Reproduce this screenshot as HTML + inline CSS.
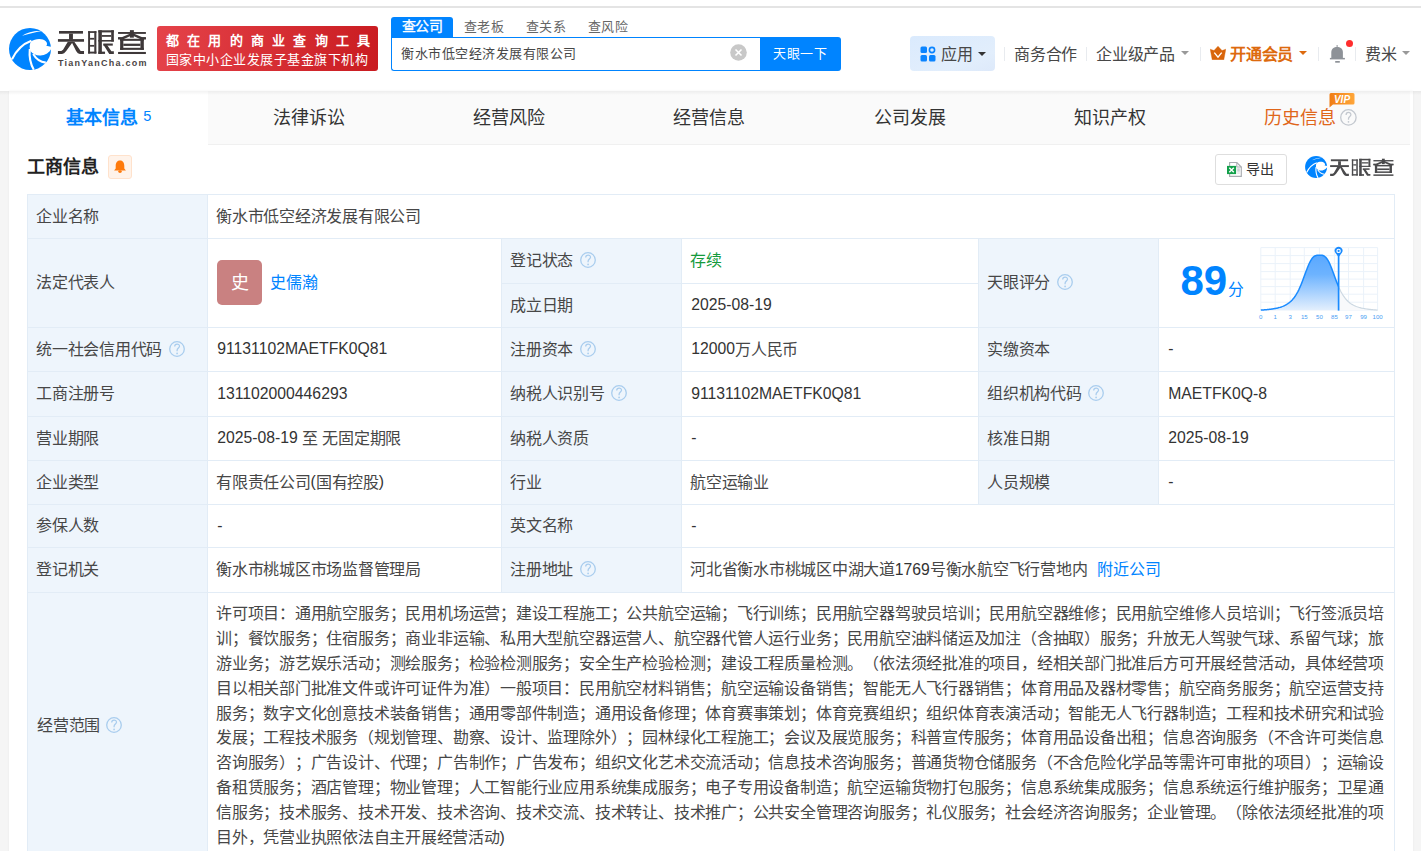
<!DOCTYPE html><html lang="zh-CN"><head><meta charset="utf-8"><style>
*{margin:0;padding:0;box-sizing:border-box}
html,body{width:1421px;height:851px;overflow:hidden;background:#f5f5f5;text-spacing-trim:space-all;font-family:"Liberation Sans",sans-serif;color:#333}
.a{position:absolute}
.t{position:absolute;white-space:nowrap;font-size:15.75px;line-height:20px;color:#333}
.c{color:#474747}
.hl{position:absolute;height:1px;background:#e2ecf6}
.vl{position:absolute;width:1px;background:#e2ecf6}
.sc{position:absolute;left:216px;width:1168px;font-size:15.75px;line-height:20px;white-space:nowrap;text-align:justify;text-align-last:justify;color:#333}
</style></head><body>
<div class="a" style="left:0;top:0;width:1421px;height:6px;background:#fff"></div>
<div class="a" style="left:0;top:6px;width:1421px;height:2px;background:#e4e4e4"></div>
<div class="a" style="left:0;top:8px;width:1421px;height:83px;background:#fff"></div>
<svg class="a" style="left:5.00px;top:23.80px" width="50.00" height="50.00" viewBox="0 0 50 50">
<circle cx="25" cy="25" r="21" fill="#0084ff"/>
<path d="M17.2 11.8 C22 8.3 30 6.5 36.8 7.1 C30 8.3 23 10 17.2 11.8 Z" fill="#fff"/>
<path d="M26 17.5 C30 14.5 37.5 14 40.8 17.2 C42.5 19 42.3 21 41.2 21.8 L47 23 C46 27 42 30.5 37 31.3 C32 32 28 30.5 25.5 27 C24.2 24 24.5 20 26 17.5 Z" fill="#fff"/>
<path d="M7 35.3 C11 27 17.5 20 26.4 16.8" fill="none" stroke="#fff" stroke-width="2.1"/>
<path d="M24.8 25 C24 33 25.5 40 28.8 45.8" fill="none" stroke="#fff" stroke-width="2.1"/>
<path d="M28.2 30 C31 35 36 38 40.8 38.6" fill="none" stroke="#fff" stroke-width="2.1"/>
</svg>
<svg class="a" style="left:55px;top:25px" width="95" height="35" viewBox="55 25 95 35"><g fill="#3e3839" shape-rendering="geometricPrecision"><rect x="59.00" y="31.00" width="23.97" height="2.64"/><rect x="69.04" y="33.64" width="3.88" height="5.99"/><rect x="57.94" y="39.10" width="26.08" height="2.64"/><path d="M67.81 41.75 L72.92 41.75 L66.22 50.91 L64.11 53.20 L61.99 54.08 L57.94 54.08 L57.94 51.09 L61.29 51.09 L63.05 49.85 Z"/><path d="M71.51 41.75 L74.33 41.75 L80.67 51.09 L84.02 51.09 L84.02 54.08 L79.97 54.08 L77.85 53.20 L76.09 50.91 Z"/><rect x="88.11" y="31.17" width="1.94" height="22.38"/><rect x="94.28" y="31.17" width="2.11" height="22.38"/><rect x="88.11" y="31.17" width="8.28" height="1.76"/><rect x="88.11" y="51.62" width="8.28" height="1.94"/><rect x="90.05" y="37.87" width="4.23" height="1.76"/><rect x="90.05" y="44.92" width="4.23" height="1.76"/><rect x="98.34" y="30.29" width="3.52" height="23.62"/><rect x="98.34" y="30.29" width="15.51" height="2.11"/><rect x="101.86" y="35.05" width="9.34" height="1.76"/><rect x="98.34" y="39.98" width="15.51" height="1.59"/><rect x="111.20" y="30.29" width="2.64" height="11.28"/><rect x="98.34" y="51.62" width="6.70" height="2.29"/><rect x="103.27" y="43.51" width="9.52" height="2.11"/><path d="M103.27 44.57 L106.80 44.57 L111.38 51.26 L113.85 51.26 L113.85 53.91 L109.26 53.91 Z"/><rect x="118.07" y="32.02" width="27.82" height="1.88"/><rect x="129.91" y="30.14" width="3.95" height="7.52"/><path d="M131.04 33.14 L133.29 34.65 L123.89 38.97 L122.39 38.97 L118.07 38.97 L118.07 37.28 L121.64 37.28 Z"/><path d="M132.92 33.14 L130.66 34.65 L140.06 38.97 L141.56 38.97 L145.89 38.97 L145.89 37.28 L142.32 37.28 Z"/><rect x="118.07" y="37.28" width="5.45" height="2.26"/><rect x="140.44" y="37.28" width="5.45" height="2.26"/><rect x="120.14" y="38.78" width="23.68" height="2.07"/><rect x="120.14" y="38.78" width="3.20" height="11.09"/><rect x="140.44" y="38.78" width="3.38" height="11.09"/><rect x="123.33" y="43.67" width="17.11" height="2.26"/><rect x="120.14" y="47.80" width="23.68" height="2.07"/><rect x="118.07" y="51.94" width="27.82" height="2.07"/></g></svg>
<div class="a" style="left:58px;top:57px;font-size:9px;line-height:12px;font-weight:bold;color:#4a4444;letter-spacing:1.25px;white-space:nowrap">TianYanCha.com</div>
<div class="a" style="left:157px;top:26px;width:221px;height:45px;border-radius:3px;background:linear-gradient(100deg,#e5434a,#c91b20)"></div>
<div class="a" style="left:166px;top:32.5px;width:204px;font-size:13px;line-height:16px;font-weight:bold;color:#fff;text-align-last:justify;text-align:justify;white-space:nowrap">都在用的商业查询工具</div>
<div class="a" style="left:165.5px;top:50.5px;width:206px;font-size:13.5px;line-height:17px;color:#fff;white-space:nowrap"><span style="font-size:13px;letter-spacing:0.500px">国家中小企业发展子基金旗下机构</span></div>
<div class="a" style="left:391px;top:17px;width:62px;height:21px;border-radius:3px 3px 0 0;background:#0084ff"></div>
<div class="a" style="left:401.5px;top:16.8px;font-size:14px;line-height:18px;-webkit-text-stroke:0.35px #fff;letter-spacing:-0.4px;color:#fff;white-space:nowrap">查公司</div>
<div class="a" style="left:463.5px;top:18px;font-size:13.5px;line-height:18px;color:#666;white-space:nowrap"><span style="font-size:13px;letter-spacing:0.500px">查老板</span></div>
<div class="a" style="left:525.5px;top:18px;font-size:13.5px;line-height:18px;color:#666;white-space:nowrap"><span style="font-size:13px;letter-spacing:0.500px">查关系</span></div>
<div class="a" style="left:587.5px;top:18px;font-size:13.5px;line-height:18px;color:#666;white-space:nowrap"><span style="font-size:13px;letter-spacing:0.500px">查风险</span></div>
<div class="a" style="left:391px;top:37px;width:370px;height:34px;border:1px solid #0084ff;border-right:none;border-radius:0 0 0 3px;background:#fff"></div>
<div class="a" style="left:401px;top:45px;font-size:13.5px;line-height:18px;color:#333;white-space:nowrap"><span class="c" style="font-size:13px;letter-spacing:0.500px">衡水市低空经济发展有限公司</span></div>
<svg class="a" style="left:730px;top:44px" width="17" height="17" viewBox="0 0 17 17"><circle cx="8.5" cy="8.5" r="8.3" fill="#c8c8c8"/><path d="M5.5 5.5 L11.5 11.5 M11.5 5.5 L5.5 11.5" stroke="#fff" stroke-width="1.6"/></svg>
<div class="a" style="left:760px;top:37px;width:81px;height:34px;border-radius:0 3px 3px 0;background:#0084ff"></div>
<div class="a" style="left:773px;top:45px;font-size:13.5px;line-height:18px;color:#fff;white-space:nowrap"><span style="font-size:13px;letter-spacing:0.500px">天眼一下</span></div>
<div class="a" style="left:910px;top:36px;width:85px;height:35px;border-radius:4px;background:linear-gradient(160deg,#daeafd,#e2eefc 70%,#dde9fa)"></div>
<svg class="a" style="left:920px;top:46px" width="16" height="16" viewBox="0 0 16 16"><rect x="0.5" y="0.5" width="6.5" height="6.5" rx="1.5" fill="#0a84ff"/><circle cx="12" cy="4" r="2.6" fill="none" stroke="#0a84ff" stroke-width="1.6"/><rect x="0.5" y="9" width="6.5" height="6.5" rx="1.5" fill="#0a84ff"/><rect x="9" y="9" width="6.5" height="6.5" rx="1.5" fill="#0a84ff"/></svg>
<div class="t" style="left:941px;top:44.5px"><span class="c" style="font-size:16px;letter-spacing:-0.250px">应用</span></div>
<svg class="a" style="left:978px;top:52px" width="8" height="4" viewBox="0 0 8 4"><path d="M0 0 L8 0 L4.0 4 Z" fill="#333"/></svg>
<div class="a" style="left:1004px;top:47px;width:1px;height:14px;background:#e8ebef"></div>
<div class="a" style="left:1086px;top:47px;width:1px;height:14px;background:#e8ebef"></div>
<div class="a" style="left:1200px;top:47px;width:1px;height:14px;background:#e8ebef"></div>
<div class="a" style="left:1318px;top:47px;width:1px;height:14px;background:#e8ebef"></div>
<div class="a" style="left:1355px;top:47px;width:1px;height:14px;background:#e8ebef"></div>
<div class="t" style="left:1014px;top:44.5px"><span class="c" style="font-size:16px;letter-spacing:-0.250px">商务合作</span></div>
<div class="t" style="left:1096px;top:44.5px"><span class="c" style="font-size:16px;letter-spacing:-0.250px">企业级产品</span></div>
<svg class="a" style="left:1181px;top:51px" width="8" height="4" viewBox="0 0 8 4"><path d="M0 0 L8 0 L4.0 4 Z" fill="#999"/></svg>
<svg class="a" style="left:1210px;top:46px" width="16" height="14" viewBox="0 0 16 14"><path d="M0.2 3.2 L4 4.6 L8 0.2 L12 4.6 L15.8 3.2 L13.8 13.8 L2.2 13.8 Z" fill="#d9650b" stroke="#d9650b" stroke-width="0.4" stroke-linejoin="round"/><path d="M4.3 6.6 L8 11.2 L11.7 6.6" fill="none" stroke="#fff" stroke-width="1.4"/></svg>
<div class="t" style="left:1230px;top:44.5px;font-weight:bold;color:#dd6a0e"><span style="font-size:16px;letter-spacing:-0.250px">开通会员</span></div>
<svg class="a" style="left:1299px;top:51px" width="8" height="4" viewBox="0 0 8 4"><path d="M0 0 L8 0 L4.0 4 Z" fill="#dd6a0e"/></svg>
<svg class="a" style="left:1329px;top:44px" width="17" height="19" viewBox="0 0 17 19"><path d="M2.3 14 L2.3 8 C2.3 4.8 5 2.9 8.1 2.9 C11.2 2.9 13.9 4.8 13.9 8 L13.9 14 Z" fill="#8e9298"/><rect x="0.9" y="13.9" width="15" height="1.5" fill="#8e9298"/><rect x="7.6" y="1" width="1" height="2.4" fill="#8e9298"/><rect x="6.2" y="17" width="4.6" height="1.7" fill="#8e9298"/></svg>
<div class="a" style="left:1346px;top:40.4px;width:7px;height:7px;border-radius:50%;background:#ff2d2d"></div>
<div class="t" style="left:1365px;top:44.5px"><span class="c" style="font-size:16px;letter-spacing:-0.250px">费米</span></div>
<svg class="a" style="left:1402px;top:51px" width="8" height="4" viewBox="0 0 8 4"><path d="M0 0 L8 0 L4.0 4 Z" fill="#999"/></svg>
<div class="a" style="left:9px;top:91px;width:1404px;height:800px;background:#fff;box-shadow:0 0 2px rgba(0,0,0,0.06)"></div>
<div class="a" style="left:9px;top:91px;width:1401px;height:54px;background:#fafafa;border-bottom:1px solid #f0f0f0"></div>
<div class="a" style="left:9px;top:91px;width:199px;height:54px;background:#fff"></div>
<div class="a" style="left:0;top:91px;width:1421px;height:4px;background:linear-gradient(rgba(0,0,0,0.05),rgba(0,0,0,0))"></div>
<div class="a" style="left:8.700000000000003px;top:106.5px;width:200px;text-align:center;font-size:18px;line-height:22px;font-weight:bold;color:#0084ff;white-space:nowrap">基本信息<span style="font-weight:normal;font-size:14.6px;margin-left:5px;position:relative;top:-3px">5</span></div>
<div class="a" style="left:208.89999999999998px;top:106.5px;width:200px;text-align:center;font-size:18px;line-height:22px;color:#333;white-space:nowrap">法律诉讼</div>
<div class="a" style="left:409.09999999999997px;top:106.5px;width:200px;text-align:center;font-size:18px;line-height:22px;color:#333;white-space:nowrap">经营风险</div>
<div class="a" style="left:609.3px;top:106.5px;width:200px;text-align:center;font-size:18px;line-height:22px;color:#333;white-space:nowrap">经营信息</div>
<div class="a" style="left:809.5px;top:106.5px;width:200px;text-align:center;font-size:18px;line-height:22px;color:#333;white-space:nowrap">公司发展</div>
<div class="a" style="left:1009.7px;top:106.5px;width:200px;text-align:center;font-size:18px;line-height:22px;color:#333;white-space:nowrap">知识产权</div>
<div class="a" style="left:1264px;top:106.5px;font-size:18px;line-height:22px;color:#e0661a;white-space:nowrap">历史信息</div>
<svg class="a" style="left:1339.0px;top:107.6px" width="18.8" height="18.8" viewBox="-9.4 -9.4 18.8 18.8"><circle cx="0" cy="0" r="7.7" fill="none" stroke="#c3c8cf" stroke-width="1.3"/><path d="M-2.3 -2.4 C-2.3 -4.2 -1.2 -5 0.1 -5 C1.5 -5 2.5 -4.1 2.5 -2.7 C2.5 -1.1 0.1 -0.7 0.1 1.3 L0.1 2.3" fill="none" stroke="#c3c8cf" stroke-width="1.25"/><circle cx="0.1" cy="4.4" r="0.85" fill="#c3c8cf"/></svg>
<svg class="a" style="left:1329px;top:92px" width="26" height="16" viewBox="0 0 26 16"><defs><linearGradient id="vg" x1="0" x2="1"><stop offset="0" stop-color="#f07d15"/><stop offset="1" stop-color="#ffa63a"/></linearGradient></defs><path d="M2 1 H24 A1.5 1.5 0 0 1 25.5 2.5 V11 A1.5 1.5 0 0 1 24 12.5 H4 L0.5 15.5 L0.5 2.5 A1.5 1.5 0 0 1 2 1 Z" fill="url(#vg)"/><text x="13" y="10.5" font-family="Liberation Sans" font-size="10" font-style="italic" font-weight="bold" fill="#fff" text-anchor="middle">VIP</text></svg>
<div class="a" style="left:26.5px;top:156px;font-size:18px;line-height:22px;font-weight:bold;color:#222;white-space:nowrap">工商信息</div>
<div class="a" style="left:108px;top:155px;width:24px;height:24px;border-radius:3px;background:#fff3ea;border:1px solid #ffe2cc"></div>
<svg class="a" style="left:114px;top:160px" width="12" height="13" viewBox="0 0 12 13"><path d="M6 0.6 C9.2 0.6 10.3 3.2 10.3 6 L10.3 8.6 L11.9 10.6 L0.1 10.6 L1.7 8.6 L1.7 6 C1.7 3.2 2.8 0.6 6 0.6 Z" fill="#ff7a0b"/><ellipse cx="6" cy="11.6" rx="1.8" ry="1.3" fill="#ff7a0b"/></svg>
<div class="a" style="left:1215px;top:154px;width:72px;height:31px;border:1px solid #dedede;border-radius:3px;background:#fff"></div>
<svg class="a" style="left:1226px;top:161px" width="17" height="17" viewBox="0 0 17 17"><path d="M3.6 1.5 H10.8 L15.3 6 V15.3 H3.6 Z" fill="#fff" stroke="#a9acb1" stroke-width="1.15"/><path d="M10.8 1.5 V6 H15.3" fill="none" stroke="#a9acb1" stroke-width="1"/><rect x="11.2" y="7.3" width="2.6" height="3.4" fill="#cdd0d4"/><rect x="11.2" y="11.6" width="2.6" height="0.9" fill="#cdd0d4"/><rect x="1" y="4.9" width="9.1" height="8.2" fill="#12a04a"/><path d="M3.3 6.8 L7.8 11.2 M7.8 6.8 L3.3 11.2" stroke="#fff" stroke-width="1.4"/></svg>
<div class="a" style="left:1246px;top:160px;font-size:14px;line-height:18px;color:#333;white-space:nowrap">导出</div>
<svg class="a" style="left:1302.90px;top:154.30px" width="26.19" height="26.19" viewBox="0 0 50 50">
<circle cx="25" cy="25" r="21" fill="#0084ff"/>
<path d="M17.2 11.8 C22 8.3 30 6.5 36.8 7.1 C30 8.3 23 10 17.2 11.8 Z" fill="#fff"/>
<path d="M26 17.5 C30 14.5 37.5 14 40.8 17.2 C42.5 19 42.3 21 41.2 21.8 L47 23 C46 27 42 30.5 37 31.3 C32 32 28 30.5 25.5 27 C24.2 24 24.5 20 26 17.5 Z" fill="#fff"/>
<path d="M7 35.3 C11 27 17.5 20 26.4 16.8" fill="none" stroke="#fff" stroke-width="2.1"/>
<path d="M24.8 25 C24 33 25.5 40 28.8 45.8" fill="none" stroke="#fff" stroke-width="2.1"/>
<path d="M28.2 30 C31 35 36 38 40.8 38.6" fill="none" stroke="#fff" stroke-width="2.1"/>
</svg>
<svg class="a" style="left:1328.2px;top:155.3px" width="68.4" height="25.2" viewBox="55 25 95 35" preserveAspectRatio="none"><g fill="#4a4a4c" shape-rendering="geometricPrecision"><rect x="59.00" y="31.00" width="23.97" height="2.64"/><rect x="69.04" y="33.64" width="3.88" height="5.99"/><rect x="57.94" y="39.10" width="26.08" height="2.64"/><path d="M67.81 41.75 L72.92 41.75 L66.22 50.91 L64.11 53.20 L61.99 54.08 L57.94 54.08 L57.94 51.09 L61.29 51.09 L63.05 49.85 Z"/><path d="M71.51 41.75 L74.33 41.75 L80.67 51.09 L84.02 51.09 L84.02 54.08 L79.97 54.08 L77.85 53.20 L76.09 50.91 Z"/><rect x="88.11" y="31.17" width="1.94" height="22.38"/><rect x="94.28" y="31.17" width="2.11" height="22.38"/><rect x="88.11" y="31.17" width="8.28" height="1.76"/><rect x="88.11" y="51.62" width="8.28" height="1.94"/><rect x="90.05" y="37.87" width="4.23" height="1.76"/><rect x="90.05" y="44.92" width="4.23" height="1.76"/><rect x="98.34" y="30.29" width="3.52" height="23.62"/><rect x="98.34" y="30.29" width="15.51" height="2.11"/><rect x="101.86" y="35.05" width="9.34" height="1.76"/><rect x="98.34" y="39.98" width="15.51" height="1.59"/><rect x="111.20" y="30.29" width="2.64" height="11.28"/><rect x="98.34" y="51.62" width="6.70" height="2.29"/><rect x="103.27" y="43.51" width="9.52" height="2.11"/><path d="M103.27 44.57 L106.80 44.57 L111.38 51.26 L113.85 51.26 L113.85 53.91 L109.26 53.91 Z"/><rect x="118.07" y="32.02" width="27.82" height="1.88"/><rect x="129.91" y="30.14" width="3.95" height="7.52"/><path d="M131.04 33.14 L133.29 34.65 L123.89 38.97 L122.39 38.97 L118.07 38.97 L118.07 37.28 L121.64 37.28 Z"/><path d="M132.92 33.14 L130.66 34.65 L140.06 38.97 L141.56 38.97 L145.89 38.97 L145.89 37.28 L142.32 37.28 Z"/><rect x="118.07" y="37.28" width="5.45" height="2.26"/><rect x="140.44" y="37.28" width="5.45" height="2.26"/><rect x="120.14" y="38.78" width="23.68" height="2.07"/><rect x="120.14" y="38.78" width="3.20" height="11.09"/><rect x="140.44" y="38.78" width="3.38" height="11.09"/><rect x="123.33" y="43.67" width="17.11" height="2.26"/><rect x="120.14" y="47.80" width="23.68" height="2.07"/><rect x="118.07" y="51.94" width="27.82" height="2.07"/></g></svg>
<div class="a" style="left:27px;top:194px;width:1368px;height:706px;background:#fff"></div>
<div class="a" style="left:27px;top:194px;width:180px;height:706px;background:#eef5fc"></div>
<div class="a" style="left:501px;top:238px;width:180px;height:354px;background:#eef5fc"></div>
<div class="a" style="left:978px;top:238px;width:180px;height:266px;background:#eef5fc"></div>
<div class="hl" style="left:27px;top:194px;width:1368px"></div>
<div class="hl" style="left:27px;top:238px;width:1368px"></div>
<div class="hl" style="left:501px;top:283px;width:478px"></div>
<div class="hl" style="left:27px;top:327px;width:1368px"></div>
<div class="hl" style="left:27px;top:371px;width:1368px"></div>
<div class="hl" style="left:27px;top:416px;width:1368px"></div>
<div class="hl" style="left:27px;top:460px;width:1368px"></div>
<div class="hl" style="left:27px;top:504px;width:1368px"></div>
<div class="hl" style="left:27px;top:547px;width:1368px"></div>
<div class="hl" style="left:27px;top:592px;width:1368px"></div>
<div class="vl" style="left:27px;top:194px;height:707px"></div>
<div class="vl" style="left:1394px;top:194px;height:707px"></div>
<div class="vl" style="left:207px;top:194px;height:707px"></div>
<div class="vl" style="left:501px;top:238px;height:355px"></div>
<div class="vl" style="left:681px;top:238px;height:355px"></div>
<div class="vl" style="left:978px;top:238px;height:267px"></div>
<div class="vl" style="left:1158px;top:238px;height:267px"></div>
<div class="t" style="left:36px;top:206.1px;"><span class="c" style="font-size:16px;letter-spacing:-0.250px;position:relative;top:0.9px">企业名称</span></div>
<div class="t" style="left:216px;top:206.1px;"><span class="c" style="font-size:16px;letter-spacing:-0.250px;position:relative;top:0.9px">衡水市低空经济发展有限公司</span></div>
<div class="t" style="left:36px;top:272.6px;"><span class="c" style="font-size:16px;letter-spacing:-0.250px;position:relative;top:0.9px">法定代表人</span></div>
<div class="a" style="left:217px;top:260px;width:45px;height:45px;border-radius:5px;background:#c98181;color:#fff;font-size:18px;line-height:47px;text-align:center">史</div>
<div class="t" style="left:270px;top:272.5px;color:#0084ff"><span style="font-size:16px;letter-spacing:-0.250px">史儒瀚</span></div>
<div class="t" style="left:510px;top:250.6px;"><span class="c" style="font-size:16px;letter-spacing:-0.250px;position:relative;top:0.9px">登记状态</span></div>
<svg class="a" style="left:578.5px;top:251.0px" width="18" height="18" viewBox="-9.0 -9.0 18 18"><circle cx="0" cy="0" r="7.3" fill="none" stroke="#a9cdee" stroke-width="1.3"/><path d="M-2.3 -2.4 C-2.3 -4.2 -1.2 -5 0.1 -5 C1.5 -5 2.5 -4.1 2.5 -2.7 C2.5 -1.1 0.1 -0.7 0.1 1.3 L0.1 2.3" fill="none" stroke="#a9cdee" stroke-width="1.25"/><circle cx="0.1" cy="4.4" r="0.85" fill="#a9cdee"/></svg>
<div class="t" style="left:690px;top:250.6px;color:#159b3d"><span style="font-size:16px;letter-spacing:-0.250px;position:relative;top:0.9px">存续</span></div>
<div class="t" style="left:510px;top:295.1px;"><span class="c" style="font-size:16px;letter-spacing:-0.250px;position:relative;top:0.9px">成立日期</span></div>
<div class="t" style="left:691.2px;top:295.1px;">2025-08-19</div>
<div class="t" style="left:987px;top:272.6px;"><span class="c" style="font-size:16px;letter-spacing:-0.250px;position:relative;top:0.9px">天眼评分</span></div>
<svg class="a" style="left:1055.5px;top:273.0px" width="18" height="18" viewBox="-9.0 -9.0 18 18"><circle cx="0" cy="0" r="7.3" fill="none" stroke="#a9cdee" stroke-width="1.3"/><path d="M-2.3 -2.4 C-2.3 -4.2 -1.2 -5 0.1 -5 C1.5 -5 2.5 -4.1 2.5 -2.7 C2.5 -1.1 0.1 -0.7 0.1 1.3 L0.1 2.3" fill="none" stroke="#a9cdee" stroke-width="1.25"/><circle cx="0.1" cy="4.4" r="0.85" fill="#a9cdee"/></svg>
<div class="t" style="left:36px;top:339.1px;"><span class="c" style="font-size:16px;letter-spacing:-0.250px;position:relative;top:0.9px">统一社会信用代码</span></div>
<svg class="a" style="left:167.5px;top:339.5px" width="18" height="18" viewBox="-9.0 -9.0 18 18"><circle cx="0" cy="0" r="7.3" fill="none" stroke="#a9cdee" stroke-width="1.3"/><path d="M-2.3 -2.4 C-2.3 -4.2 -1.2 -5 0.1 -5 C1.5 -5 2.5 -4.1 2.5 -2.7 C2.5 -1.1 0.1 -0.7 0.1 1.3 L0.1 2.3" fill="none" stroke="#a9cdee" stroke-width="1.25"/><circle cx="0.1" cy="4.4" r="0.85" fill="#a9cdee"/></svg>
<div class="t" style="left:217.2px;top:339.1px;">91131102MAETFK0Q81</div>
<div class="t" style="left:510px;top:339.1px;"><span class="c" style="font-size:16px;letter-spacing:-0.250px;position:relative;top:0.9px">注册资本</span></div>
<svg class="a" style="left:578.5px;top:339.5px" width="18" height="18" viewBox="-9.0 -9.0 18 18"><circle cx="0" cy="0" r="7.3" fill="none" stroke="#a9cdee" stroke-width="1.3"/><path d="M-2.3 -2.4 C-2.3 -4.2 -1.2 -5 0.1 -5 C1.5 -5 2.5 -4.1 2.5 -2.7 C2.5 -1.1 0.1 -0.7 0.1 1.3 L0.1 2.3" fill="none" stroke="#a9cdee" stroke-width="1.25"/><circle cx="0.1" cy="4.4" r="0.85" fill="#a9cdee"/></svg>
<div class="t" style="left:691.2px;top:339.1px;">12000<span class="c" style="font-size:16px;letter-spacing:-0.250px;position:relative;top:0.9px">万人民币</span></div>
<div class="t" style="left:987px;top:339.1px;"><span class="c" style="font-size:16px;letter-spacing:-0.250px;position:relative;top:0.9px">实缴资本</span></div>
<div class="t" style="left:1168.2px;top:339.1px;">-</div>
<div class="t" style="left:36px;top:383.6px;"><span class="c" style="font-size:16px;letter-spacing:-0.250px;position:relative;top:0.9px">工商注册号</span></div>
<div class="t" style="left:217.2px;top:383.6px;">131102000446293</div>
<div class="t" style="left:510px;top:383.6px;"><span class="c" style="font-size:16px;letter-spacing:-0.250px;position:relative;top:0.9px">纳税人识别号</span></div>
<svg class="a" style="left:610.0px;top:384.0px" width="18" height="18" viewBox="-9.0 -9.0 18 18"><circle cx="0" cy="0" r="7.3" fill="none" stroke="#a9cdee" stroke-width="1.3"/><path d="M-2.3 -2.4 C-2.3 -4.2 -1.2 -5 0.1 -5 C1.5 -5 2.5 -4.1 2.5 -2.7 C2.5 -1.1 0.1 -0.7 0.1 1.3 L0.1 2.3" fill="none" stroke="#a9cdee" stroke-width="1.25"/><circle cx="0.1" cy="4.4" r="0.85" fill="#a9cdee"/></svg>
<div class="t" style="left:691.2px;top:383.6px;">91131102MAETFK0Q81</div>
<div class="t" style="left:987px;top:383.6px;"><span class="c" style="font-size:16px;letter-spacing:-0.250px;position:relative;top:0.9px">组织机构代码</span></div>
<svg class="a" style="left:1087.0px;top:384.0px" width="18" height="18" viewBox="-9.0 -9.0 18 18"><circle cx="0" cy="0" r="7.3" fill="none" stroke="#a9cdee" stroke-width="1.3"/><path d="M-2.3 -2.4 C-2.3 -4.2 -1.2 -5 0.1 -5 C1.5 -5 2.5 -4.1 2.5 -2.7 C2.5 -1.1 0.1 -0.7 0.1 1.3 L0.1 2.3" fill="none" stroke="#a9cdee" stroke-width="1.25"/><circle cx="0.1" cy="4.4" r="0.85" fill="#a9cdee"/></svg>
<div class="t" style="left:1168.2px;top:383.6px;">MAETFK0Q-8</div>
<div class="t" style="left:36px;top:428.1px;"><span class="c" style="font-size:16px;letter-spacing:-0.250px;position:relative;top:0.9px">营业期限</span></div>
<div class="t" style="left:217.2px;top:428.1px;">2025-08-19 <span class="c" style="font-size:16px;letter-spacing:-0.250px;position:relative;top:0.9px">至</span> <span class="c" style="font-size:16px;letter-spacing:-0.250px;position:relative;top:0.9px">无固定期限</span></div>
<div class="t" style="left:510px;top:428.1px;"><span class="c" style="font-size:16px;letter-spacing:-0.250px;position:relative;top:0.9px">纳税人资质</span></div>
<div class="t" style="left:691.2px;top:428.1px;">-</div>
<div class="t" style="left:987px;top:428.1px;"><span class="c" style="font-size:16px;letter-spacing:-0.250px;position:relative;top:0.9px">核准日期</span></div>
<div class="t" style="left:1168.2px;top:428.1px;">2025-08-19</div>
<div class="t" style="left:36px;top:472.1px;"><span class="c" style="font-size:16px;letter-spacing:-0.250px;position:relative;top:0.9px">企业类型</span></div>
<div class="t" style="left:216px;top:472.1px;"><span class="c" style="font-size:16px;letter-spacing:-0.250px;position:relative;top:0.9px">有限责任公司</span>(<span class="c" style="font-size:16px;letter-spacing:-0.250px;position:relative;top:0.9px">国有控股</span>)</div>
<div class="t" style="left:510px;top:472.1px;"><span class="c" style="font-size:16px;letter-spacing:-0.250px;position:relative;top:0.9px">行业</span></div>
<div class="t" style="left:690px;top:472.1px;"><span class="c" style="font-size:16px;letter-spacing:-0.250px;position:relative;top:0.9px">航空运输业</span></div>
<div class="t" style="left:987px;top:472.1px;"><span class="c" style="font-size:16px;letter-spacing:-0.250px;position:relative;top:0.9px">人员规模</span></div>
<div class="t" style="left:1168.2px;top:472.1px;">-</div>
<div class="t" style="left:36px;top:515.6px;"><span class="c" style="font-size:16px;letter-spacing:-0.250px;position:relative;top:0.9px">参保人数</span></div>
<div class="t" style="left:217.2px;top:515.6px;">-</div>
<div class="t" style="left:510px;top:515.6px;"><span class="c" style="font-size:16px;letter-spacing:-0.250px;position:relative;top:0.9px">英文名称</span></div>
<div class="t" style="left:691.2px;top:515.6px;">-</div>
<div class="t" style="left:36px;top:559.6px;"><span class="c" style="font-size:16px;letter-spacing:-0.250px;position:relative;top:0.9px">登记机关</span></div>
<div class="t" style="left:216px;top:559.6px;"><span class="c" style="font-size:16px;letter-spacing:-0.250px;position:relative;top:0.9px">衡水市桃城区市场监督管理局</span></div>
<div class="t" style="left:510px;top:559.6px;"><span class="c" style="font-size:16px;letter-spacing:-0.250px;position:relative;top:0.9px">注册地址</span></div>
<svg class="a" style="left:578.5px;top:560.0px" width="18" height="18" viewBox="-9.0 -9.0 18 18"><circle cx="0" cy="0" r="7.3" fill="none" stroke="#a9cdee" stroke-width="1.3"/><path d="M-2.3 -2.4 C-2.3 -4.2 -1.2 -5 0.1 -5 C1.5 -5 2.5 -4.1 2.5 -2.7 C2.5 -1.1 0.1 -0.7 0.1 1.3 L0.1 2.3" fill="none" stroke="#a9cdee" stroke-width="1.25"/><circle cx="0.1" cy="4.4" r="0.85" fill="#a9cdee"/></svg>
<div class="t" style="left:690px;top:559.6px;"><span class="c" style="font-size:16px;letter-spacing:-0.250px;position:relative;top:0.9px">河北省衡水市桃城区中湖大道</span>1769<span class="c" style="font-size:16px;letter-spacing:-0.250px;position:relative;top:0.9px">号衡水航空飞行营地内</span><span style="color:#0084ff;margin-left:10px"><span style="font-size:16px;letter-spacing:-0.250px;position:relative;top:0.9px">附近公司</span></span></div>
<div class="t" style="left:37px;top:715.1px;"><span class="c" style="font-size:16px;letter-spacing:-0.250px;position:relative;top:0.9px">经营范围</span></div>
<svg class="a" style="left:104.5px;top:716.0px" width="18" height="18" viewBox="-9.0 -9.0 18 18"><circle cx="0" cy="0" r="7.3" fill="none" stroke="#a9cdee" stroke-width="1.3"/><path d="M-2.3 -2.4 C-2.3 -4.2 -1.2 -5 0.1 -5 C1.5 -5 2.5 -4.1 2.5 -2.7 C2.5 -1.1 0.1 -0.7 0.1 1.3 L0.1 2.3" fill="none" stroke="#a9cdee" stroke-width="1.25"/><circle cx="0.1" cy="4.4" r="0.85" fill="#a9cdee"/></svg>
<div class="sc" style="top:604.20px"><span class="c" style="font-size:16px;letter-spacing:-0.250px">许可项目：通用航空服务；民用机场运营；建设工程施工；公共航空运输；飞行训练；民用航空器驾驶员培训；民用航空器维修；民用航空维修人员培训；飞行签派员培</span></div>
<div class="sc" style="top:629.03px"><span class="c" style="font-size:16px;letter-spacing:-0.250px">训；餐饮服务；住宿服务；商业非运输、私用大型航空器运营人、航空器代管人运行业务；民用航空油料储运及加注（含抽取）服务；升放无人驾驶气球、系留气球；旅</span></div>
<div class="sc" style="top:653.86px"><span class="c" style="font-size:16px;letter-spacing:-0.250px">游业务；游艺娱乐活动；测绘服务；检验检测服务；安全生产检验检测；建设工程质量检测。（依法须经批准的项目，经相关部门批准后方可开展经营活动，具体经营项</span></div>
<div class="sc" style="top:678.69px"><span class="c" style="font-size:16px;letter-spacing:-0.250px">目以相关部门批准文件或许可证件为准）一般项目：民用航空材料销售；航空运输设备销售；智能无人飞行器销售；体育用品及器材零售；航空商务服务；航空运营支持</span></div>
<div class="sc" style="top:703.52px"><span class="c" style="font-size:16px;letter-spacing:-0.250px">服务；数字文化创意技术装备销售；通用零部件制造；通用设备修理；体育赛事策划；体育竞赛组织；组织体育表演活动；智能无人飞行器制造；工程和技术研究和试验</span></div>
<div class="sc" style="top:728.35px"><span class="c" style="font-size:16px;letter-spacing:-0.250px">发展；工程技术服务（规划管理、勘察、设计、监理除外）；园林绿化工程施工；会议及展览服务；科普宣传服务；体育用品设备出租；信息咨询服务（不含许可类信息</span></div>
<div class="sc" style="top:753.18px"><span class="c" style="font-size:16px;letter-spacing:-0.250px">咨询服务）；广告设计、代理；广告制作；广告发布；组织文化艺术交流活动；信息技术咨询服务；普通货物仓储服务（不含危险化学品等需许可审批的项目）；运输设</span></div>
<div class="sc" style="top:778.01px"><span class="c" style="font-size:16px;letter-spacing:-0.250px">备租赁服务；酒店管理；物业管理；人工智能行业应用系统集成服务；电子专用设备制造；航空运输货物打包服务；信息系统集成服务；信息系统运行维护服务；卫星通</span></div>
<div class="sc" style="top:802.84px"><span class="c" style="font-size:16px;letter-spacing:-0.250px">信服务；技术服务、技术开发、技术咨询、技术交流、技术转让、技术推广；公共安全管理咨询服务；礼仪服务；社会经济咨询服务；企业管理。（除依法须经批准的项</span></div>
<div class="t" style="left:216px;top:827.67px"><span class="c" style="font-size:16px;letter-spacing:-0.250px">目外，凭营业执照依法自主开展经营活动</span>)</div>
<div class="a" style="left:1180.5px;top:258px;font-size:42px;line-height:46px;font-weight:bold;color:#0084ff;white-space:nowrap">89</div>
<div class="a" style="left:1228px;top:280px;font-size:15.75px;line-height:20px;color:#0084ff;white-space:nowrap">分</div>
<svg class="a" style="left:1250px;top:240px" width="140" height="85" viewBox="1250 240 140 85"><defs><linearGradient id="cg" x1="0" y1="0" x2="0" y2="1"><stop offset="0" stop-color="#5aa8ff"/><stop offset="0.35" stop-color="#6db3ff"/><stop offset="1" stop-color="#e3effd"/></linearGradient><clipPath id="cl"><rect x="1250" y="240" width="88.59999999999991" height="80"/></clipPath><clipPath id="cr"><rect x="1338.6" y="240" width="60" height="80"/></clipPath></defs><line x1="1260.8" y1="247.6" x2="1260.8" y2="310.1" stroke="#ebf2fa" stroke-width="1"/><line x1="1275.2" y1="247.6" x2="1275.2" y2="310.1" stroke="#ebf2fa" stroke-width="1"/><line x1="1290.2" y1="247.6" x2="1290.2" y2="310.1" stroke="#ebf2fa" stroke-width="1"/><line x1="1304.3" y1="247.6" x2="1304.3" y2="310.1" stroke="#ebf2fa" stroke-width="1"/><line x1="1319.4" y1="247.6" x2="1319.4" y2="310.1" stroke="#ebf2fa" stroke-width="1"/><line x1="1334.4" y1="247.6" x2="1334.4" y2="310.1" stroke="#ebf2fa" stroke-width="1"/><line x1="1348.5" y1="247.6" x2="1348.5" y2="310.1" stroke="#ebf2fa" stroke-width="1"/><line x1="1363.6" y1="247.6" x2="1363.6" y2="310.1" stroke="#ebf2fa" stroke-width="1"/><line x1="1377.6" y1="247.6" x2="1377.6" y2="310.1" stroke="#ebf2fa" stroke-width="1"/><line x1="1260.8" y1="247.6" x2="1377.6" y2="247.6" stroke="#ebf2fa" stroke-width="1"/><line x1="1260.8" y1="255.6" x2="1377.6" y2="255.6" stroke="#ebf2fa" stroke-width="1"/><line x1="1260.8" y1="263.6" x2="1377.6" y2="263.6" stroke="#ebf2fa" stroke-width="1"/><line x1="1260.8" y1="271.6" x2="1377.6" y2="271.6" stroke="#ebf2fa" stroke-width="1"/><line x1="1260.8" y1="279.1" x2="1377.6" y2="279.1" stroke="#ebf2fa" stroke-width="1"/><line x1="1260.8" y1="286.6" x2="1377.6" y2="286.6" stroke="#ebf2fa" stroke-width="1"/><line x1="1260.8" y1="294.2" x2="1377.6" y2="294.2" stroke="#ebf2fa" stroke-width="1"/><line x1="1260.8" y1="302.2" x2="1377.6" y2="302.2" stroke="#ebf2fa" stroke-width="1"/><line x1="1260.8" y1="310.1" x2="1377.6" y2="310.1" stroke="#ebf2fa" stroke-width="1"/><path d="M1260.80 310.10 L1261.53 310.05 L1262.26 310.01 L1262.99 309.96 L1263.72 309.90 L1264.45 309.85 L1265.18 309.79 L1265.91 309.73 L1266.64 309.66 L1267.37 309.59 L1268.10 309.51 L1268.83 309.43 L1269.56 309.35 L1270.29 309.26 L1271.02 309.17 L1271.75 309.07 L1272.48 308.96 L1273.21 308.84 L1273.94 308.72 L1274.67 308.59 L1275.40 308.45 L1276.13 308.30 L1276.86 308.15 L1277.59 307.98 L1278.32 307.79 L1279.05 307.60 L1279.78 307.39 L1280.51 307.16 L1281.24 306.92 L1281.97 306.66 L1282.70 306.38 L1283.43 306.08 L1284.16 305.76 L1284.89 305.41 L1285.62 305.03 L1286.35 304.63 L1287.08 304.19 L1287.81 303.71 L1288.54 303.20 L1289.27 302.65 L1290.00 302.05 L1290.73 301.40 L1291.46 300.69 L1292.19 299.94 L1292.92 299.12 L1293.65 298.23 L1294.38 297.27 L1295.11 296.24 L1295.84 295.13 L1296.57 293.94 L1297.30 292.66 L1298.03 291.30 L1298.76 289.84 L1299.49 288.29 L1300.22 286.66 L1300.95 284.94 L1301.68 283.14 L1302.41 281.26 L1303.14 279.33 L1303.87 277.36 L1304.60 275.36 L1305.33 273.35 L1306.06 271.35 L1306.79 269.40 L1307.52 267.51 L1308.25 265.71 L1308.98 264.02 L1309.71 262.46 L1310.44 261.05 L1311.17 259.81 L1311.90 258.72 L1312.63 257.81 L1313.36 257.05 L1314.09 256.46 L1314.82 256.00 L1315.55 255.67 L1316.28 255.45 L1317.01 255.31 L1317.74 255.23 L1318.47 255.21 L1319.20 255.20 L1319.93 255.20 L1320.66 255.21 L1321.39 255.26 L1322.12 255.36 L1322.85 255.54 L1323.58 255.81 L1324.31 256.19 L1325.04 256.71 L1325.77 257.38 L1326.50 258.20 L1327.23 259.19 L1327.96 260.35 L1328.69 261.67 L1329.42 263.15 L1330.15 264.77 L1330.88 266.51 L1331.61 268.35 L1332.34 270.28 L1333.07 272.25 L1333.80 274.25 L1334.53 276.26 L1335.26 278.26 L1335.99 280.21 L1336.72 282.12 L1337.45 283.96 L1338.18 285.72 L1338.91 287.41 L1339.64 289.00 L1340.37 290.51 L1341.10 291.93 L1341.83 293.25 L1342.56 294.49 L1343.29 295.65 L1344.02 296.72 L1344.75 297.72 L1345.48 298.64 L1346.21 299.49 L1346.94 300.29 L1347.67 301.02 L1348.40 301.70 L1349.13 302.32 L1349.86 302.90 L1350.59 303.44 L1351.32 303.93 L1352.05 304.39 L1352.78 304.81 L1353.51 305.21 L1354.24 305.57 L1354.97 305.91 L1355.70 306.22 L1356.43 306.51 L1357.16 306.78 L1357.89 307.03 L1358.62 307.27 L1359.35 307.49 L1360.08 307.69 L1360.81 307.88 L1361.54 308.05 L1362.27 308.22 L1363.00 308.37 L1363.73 308.52 L1364.46 308.65 L1365.19 308.78 L1365.92 308.90 L1366.65 309.01 L1367.38 309.11 L1368.11 309.21 L1368.84 309.30 L1369.57 309.39 L1370.30 309.47 L1371.03 309.55 L1371.76 309.62 L1372.49 309.69 L1373.22 309.75 L1373.95 309.82 L1374.68 309.87 L1375.41 309.93 L1376.14 309.98 L1376.87 310.03 L1377.60 310.08 L1377.6 310.1 L1260.8 310.1 Z" fill="#f8f9fb" clip-path="url(#cr)"/><path d="M1260.80 310.10 L1261.53 310.05 L1262.26 310.01 L1262.99 309.96 L1263.72 309.90 L1264.45 309.85 L1265.18 309.79 L1265.91 309.73 L1266.64 309.66 L1267.37 309.59 L1268.10 309.51 L1268.83 309.43 L1269.56 309.35 L1270.29 309.26 L1271.02 309.17 L1271.75 309.07 L1272.48 308.96 L1273.21 308.84 L1273.94 308.72 L1274.67 308.59 L1275.40 308.45 L1276.13 308.30 L1276.86 308.15 L1277.59 307.98 L1278.32 307.79 L1279.05 307.60 L1279.78 307.39 L1280.51 307.16 L1281.24 306.92 L1281.97 306.66 L1282.70 306.38 L1283.43 306.08 L1284.16 305.76 L1284.89 305.41 L1285.62 305.03 L1286.35 304.63 L1287.08 304.19 L1287.81 303.71 L1288.54 303.20 L1289.27 302.65 L1290.00 302.05 L1290.73 301.40 L1291.46 300.69 L1292.19 299.94 L1292.92 299.12 L1293.65 298.23 L1294.38 297.27 L1295.11 296.24 L1295.84 295.13 L1296.57 293.94 L1297.30 292.66 L1298.03 291.30 L1298.76 289.84 L1299.49 288.29 L1300.22 286.66 L1300.95 284.94 L1301.68 283.14 L1302.41 281.26 L1303.14 279.33 L1303.87 277.36 L1304.60 275.36 L1305.33 273.35 L1306.06 271.35 L1306.79 269.40 L1307.52 267.51 L1308.25 265.71 L1308.98 264.02 L1309.71 262.46 L1310.44 261.05 L1311.17 259.81 L1311.90 258.72 L1312.63 257.81 L1313.36 257.05 L1314.09 256.46 L1314.82 256.00 L1315.55 255.67 L1316.28 255.45 L1317.01 255.31 L1317.74 255.23 L1318.47 255.21 L1319.20 255.20 L1319.93 255.20 L1320.66 255.21 L1321.39 255.26 L1322.12 255.36 L1322.85 255.54 L1323.58 255.81 L1324.31 256.19 L1325.04 256.71 L1325.77 257.38 L1326.50 258.20 L1327.23 259.19 L1327.96 260.35 L1328.69 261.67 L1329.42 263.15 L1330.15 264.77 L1330.88 266.51 L1331.61 268.35 L1332.34 270.28 L1333.07 272.25 L1333.80 274.25 L1334.53 276.26 L1335.26 278.26 L1335.99 280.21 L1336.72 282.12 L1337.45 283.96 L1338.18 285.72 L1338.91 287.41 L1339.64 289.00 L1340.37 290.51 L1341.10 291.93 L1341.83 293.25 L1342.56 294.49 L1343.29 295.65 L1344.02 296.72 L1344.75 297.72 L1345.48 298.64 L1346.21 299.49 L1346.94 300.29 L1347.67 301.02 L1348.40 301.70 L1349.13 302.32 L1349.86 302.90 L1350.59 303.44 L1351.32 303.93 L1352.05 304.39 L1352.78 304.81 L1353.51 305.21 L1354.24 305.57 L1354.97 305.91 L1355.70 306.22 L1356.43 306.51 L1357.16 306.78 L1357.89 307.03 L1358.62 307.27 L1359.35 307.49 L1360.08 307.69 L1360.81 307.88 L1361.54 308.05 L1362.27 308.22 L1363.00 308.37 L1363.73 308.52 L1364.46 308.65 L1365.19 308.78 L1365.92 308.90 L1366.65 309.01 L1367.38 309.11 L1368.11 309.21 L1368.84 309.30 L1369.57 309.39 L1370.30 309.47 L1371.03 309.55 L1371.76 309.62 L1372.49 309.69 L1373.22 309.75 L1373.95 309.82 L1374.68 309.87 L1375.41 309.93 L1376.14 309.98 L1376.87 310.03 L1377.60 310.08 L1377.6 310.1 L1260.8 310.1 Z" fill="url(#cg)" clip-path="url(#cl)"/><path d="M1260.80 310.10 L1261.53 310.05 L1262.26 310.01 L1262.99 309.96 L1263.72 309.90 L1264.45 309.85 L1265.18 309.79 L1265.91 309.73 L1266.64 309.66 L1267.37 309.59 L1268.10 309.51 L1268.83 309.43 L1269.56 309.35 L1270.29 309.26 L1271.02 309.17 L1271.75 309.07 L1272.48 308.96 L1273.21 308.84 L1273.94 308.72 L1274.67 308.59 L1275.40 308.45 L1276.13 308.30 L1276.86 308.15 L1277.59 307.98 L1278.32 307.79 L1279.05 307.60 L1279.78 307.39 L1280.51 307.16 L1281.24 306.92 L1281.97 306.66 L1282.70 306.38 L1283.43 306.08 L1284.16 305.76 L1284.89 305.41 L1285.62 305.03 L1286.35 304.63 L1287.08 304.19 L1287.81 303.71 L1288.54 303.20 L1289.27 302.65 L1290.00 302.05 L1290.73 301.40 L1291.46 300.69 L1292.19 299.94 L1292.92 299.12 L1293.65 298.23 L1294.38 297.27 L1295.11 296.24 L1295.84 295.13 L1296.57 293.94 L1297.30 292.66 L1298.03 291.30 L1298.76 289.84 L1299.49 288.29 L1300.22 286.66 L1300.95 284.94 L1301.68 283.14 L1302.41 281.26 L1303.14 279.33 L1303.87 277.36 L1304.60 275.36 L1305.33 273.35 L1306.06 271.35 L1306.79 269.40 L1307.52 267.51 L1308.25 265.71 L1308.98 264.02 L1309.71 262.46 L1310.44 261.05 L1311.17 259.81 L1311.90 258.72 L1312.63 257.81 L1313.36 257.05 L1314.09 256.46 L1314.82 256.00 L1315.55 255.67 L1316.28 255.45 L1317.01 255.31 L1317.74 255.23 L1318.47 255.21 L1319.20 255.20 L1319.93 255.20 L1320.66 255.21 L1321.39 255.26 L1322.12 255.36 L1322.85 255.54 L1323.58 255.81 L1324.31 256.19 L1325.04 256.71 L1325.77 257.38 L1326.50 258.20 L1327.23 259.19 L1327.96 260.35 L1328.69 261.67 L1329.42 263.15 L1330.15 264.77 L1330.88 266.51 L1331.61 268.35 L1332.34 270.28 L1333.07 272.25 L1333.80 274.25 L1334.53 276.26 L1335.26 278.26 L1335.99 280.21 L1336.72 282.12 L1337.45 283.96 L1338.18 285.72 L1338.91 287.41 L1339.64 289.00 L1340.37 290.51 L1341.10 291.93 L1341.83 293.25 L1342.56 294.49 L1343.29 295.65 L1344.02 296.72 L1344.75 297.72 L1345.48 298.64 L1346.21 299.49 L1346.94 300.29 L1347.67 301.02 L1348.40 301.70 L1349.13 302.32 L1349.86 302.90 L1350.59 303.44 L1351.32 303.93 L1352.05 304.39 L1352.78 304.81 L1353.51 305.21 L1354.24 305.57 L1354.97 305.91 L1355.70 306.22 L1356.43 306.51 L1357.16 306.78 L1357.89 307.03 L1358.62 307.27 L1359.35 307.49 L1360.08 307.69 L1360.81 307.88 L1361.54 308.05 L1362.27 308.22 L1363.00 308.37 L1363.73 308.52 L1364.46 308.65 L1365.19 308.78 L1365.92 308.90 L1366.65 309.01 L1367.38 309.11 L1368.11 309.21 L1368.84 309.30 L1369.57 309.39 L1370.30 309.47 L1371.03 309.55 L1371.76 309.62 L1372.49 309.69 L1373.22 309.75 L1373.95 309.82 L1374.68 309.87 L1375.41 309.93 L1376.14 309.98 L1376.87 310.03 L1377.60 310.08" fill="none" stroke="#ccd8e2" stroke-width="1.2" clip-path="url(#cr)"/><path d="M1260.80 310.10 L1261.53 310.05 L1262.26 310.01 L1262.99 309.96 L1263.72 309.90 L1264.45 309.85 L1265.18 309.79 L1265.91 309.73 L1266.64 309.66 L1267.37 309.59 L1268.10 309.51 L1268.83 309.43 L1269.56 309.35 L1270.29 309.26 L1271.02 309.17 L1271.75 309.07 L1272.48 308.96 L1273.21 308.84 L1273.94 308.72 L1274.67 308.59 L1275.40 308.45 L1276.13 308.30 L1276.86 308.15 L1277.59 307.98 L1278.32 307.79 L1279.05 307.60 L1279.78 307.39 L1280.51 307.16 L1281.24 306.92 L1281.97 306.66 L1282.70 306.38 L1283.43 306.08 L1284.16 305.76 L1284.89 305.41 L1285.62 305.03 L1286.35 304.63 L1287.08 304.19 L1287.81 303.71 L1288.54 303.20 L1289.27 302.65 L1290.00 302.05 L1290.73 301.40 L1291.46 300.69 L1292.19 299.94 L1292.92 299.12 L1293.65 298.23 L1294.38 297.27 L1295.11 296.24 L1295.84 295.13 L1296.57 293.94 L1297.30 292.66 L1298.03 291.30 L1298.76 289.84 L1299.49 288.29 L1300.22 286.66 L1300.95 284.94 L1301.68 283.14 L1302.41 281.26 L1303.14 279.33 L1303.87 277.36 L1304.60 275.36 L1305.33 273.35 L1306.06 271.35 L1306.79 269.40 L1307.52 267.51 L1308.25 265.71 L1308.98 264.02 L1309.71 262.46 L1310.44 261.05 L1311.17 259.81 L1311.90 258.72 L1312.63 257.81 L1313.36 257.05 L1314.09 256.46 L1314.82 256.00 L1315.55 255.67 L1316.28 255.45 L1317.01 255.31 L1317.74 255.23 L1318.47 255.21 L1319.20 255.20 L1319.93 255.20 L1320.66 255.21 L1321.39 255.26 L1322.12 255.36 L1322.85 255.54 L1323.58 255.81 L1324.31 256.19 L1325.04 256.71 L1325.77 257.38 L1326.50 258.20 L1327.23 259.19 L1327.96 260.35 L1328.69 261.67 L1329.42 263.15 L1330.15 264.77 L1330.88 266.51 L1331.61 268.35 L1332.34 270.28 L1333.07 272.25 L1333.80 274.25 L1334.53 276.26 L1335.26 278.26 L1335.99 280.21 L1336.72 282.12 L1337.45 283.96 L1338.18 285.72 L1338.91 287.41 L1339.64 289.00 L1340.37 290.51 L1341.10 291.93 L1341.83 293.25 L1342.56 294.49 L1343.29 295.65 L1344.02 296.72 L1344.75 297.72 L1345.48 298.64 L1346.21 299.49 L1346.94 300.29 L1347.67 301.02 L1348.40 301.70 L1349.13 302.32 L1349.86 302.90 L1350.59 303.44 L1351.32 303.93 L1352.05 304.39 L1352.78 304.81 L1353.51 305.21 L1354.24 305.57 L1354.97 305.91 L1355.70 306.22 L1356.43 306.51 L1357.16 306.78 L1357.89 307.03 L1358.62 307.27 L1359.35 307.49 L1360.08 307.69 L1360.81 307.88 L1361.54 308.05 L1362.27 308.22 L1363.00 308.37 L1363.73 308.52 L1364.46 308.65 L1365.19 308.78 L1365.92 308.90 L1366.65 309.01 L1367.38 309.11 L1368.11 309.21 L1368.84 309.30 L1369.57 309.39 L1370.30 309.47 L1371.03 309.55 L1371.76 309.62 L1372.49 309.69 L1373.22 309.75 L1373.95 309.82 L1374.68 309.87 L1375.41 309.93 L1376.14 309.98 L1376.87 310.03 L1377.60 310.08" fill="none" stroke="#1a8bff" stroke-width="1.5" clip-path="url(#cl)"/><line x1="1338.6" y1="254" x2="1338.6" y2="310.6" stroke="#1a8bff" stroke-width="1.7"/><path d="M1338.6 257 L1335.3 252.8 A3.9 3.9 0 1 1 1341.8999999999999 252.8 Z" fill="#1a8bff"/><circle cx="1338.6" cy="250.9" r="2.2" fill="#fff"/><circle cx="1338.6" cy="250.9" r="1.1" fill="#1a8bff"/><text x="1260.8" y="318.6" font-family="Liberation Sans" font-size="6.1" fill="#4a9ef3" text-anchor="middle">0</text><text x="1275.2" y="318.6" font-family="Liberation Sans" font-size="6.1" fill="#4a9ef3" text-anchor="middle">1</text><text x="1290.2" y="318.6" font-family="Liberation Sans" font-size="6.1" fill="#4a9ef3" text-anchor="middle">3</text><text x="1304.3" y="318.6" font-family="Liberation Sans" font-size="6.1" fill="#4a9ef3" text-anchor="middle">15</text><text x="1319.4" y="318.6" font-family="Liberation Sans" font-size="6.1" fill="#4a9ef3" text-anchor="middle">50</text><text x="1334.4" y="318.6" font-family="Liberation Sans" font-size="6.1" fill="#4a9ef3" text-anchor="middle">85</text><text x="1348.5" y="318.6" font-family="Liberation Sans" font-size="6.1" fill="#4a9ef3" text-anchor="middle">97</text><text x="1363.6" y="318.6" font-family="Liberation Sans" font-size="6.1" fill="#4a9ef3" text-anchor="middle">99</text><text x="1377.6" y="318.6" font-family="Liberation Sans" font-size="6.1" fill="#4a9ef3" text-anchor="middle">100</text></svg>
</body></html>
